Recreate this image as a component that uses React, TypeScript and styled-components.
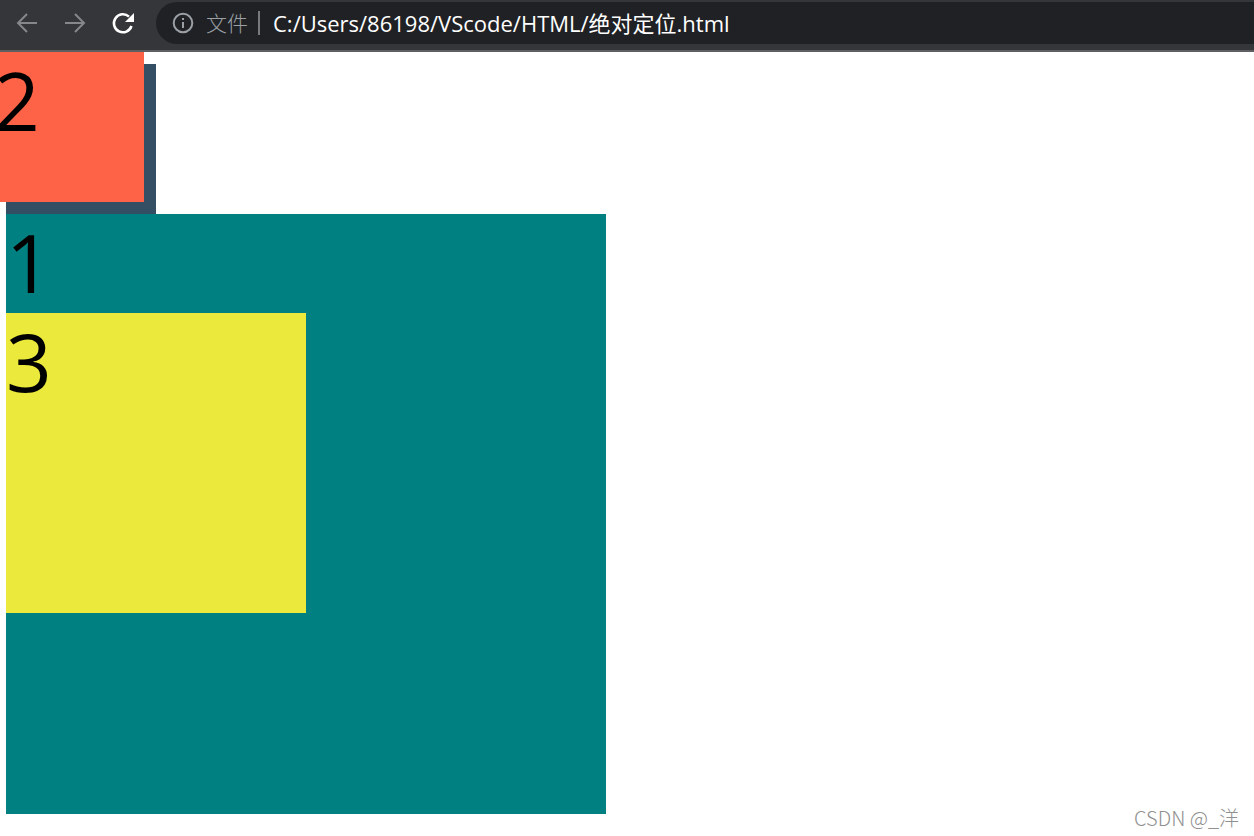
import React from "react";
import styled, { createGlobalStyle } from "styled-components";

const GlobalStyle = createGlobalStyle`
  *, *::before, *::after { box-sizing: border-box; }
  body {
    margin: 0;
    background: #fff;
    font-family: "Open Sans", "Noto Sans", "Noto Sans CJK SC", sans-serif;
  }
`;

const Window = styled.div`
  position: relative;
  display: flex;
  flex-direction: column;
  min-height: 100vh;
  overflow: hidden;
`;

const Toolbar = styled.header`
  display: flex;
  padding: 2px 0 6px 15px;
  background: #35363a;
  border-bottom: 2px solid #5f5f62;
`;

const NavButtons = styled.nav`
  display: flex;
  align-items: center;
  gap: 24px;
  margin-right: 21px;
`;

const IconButton = styled.button<{ $active?: boolean }>`
  display: flex;
  width: 24px;
  height: 24px;
  padding: 0;
  border: 0;
  background: none;
  color: ${(p) => (p.$active ? "#ffffff" : "#86878a")};
`;

const AddressBar = styled.div`
  display: flex;
  flex: 1;
  align-items: center;
  min-width: 0;
  height: 42px;
  padding-left: 15px;
  border-radius: 21px 0 0 21px;
  background: #202124;
`;

const SiteInfo = styled.button`
  display: flex;
  align-items: center;
  gap: 11px;
  height: 24px;
  padding: 0 10px 0 0;
  border: 0;
  border-right: 2px solid #77797c;
  background: none;
  color: #9aa0a6;
  font-family: "Noto Sans CJK SC", sans-serif;
  font-size: 21px;
  font-weight: 300;
  line-height: 22px;
`;

const SiteLabel = styled.span`
  padding-bottom: 2px;
`;

const UrlInput = styled.input`
  flex: 1;
  min-width: 0;
  height: 32px;
  padding: 0 0 2px 13px;
  border: 0;
  outline: 0;
  background: none;
  color: #fff;
  font-family: "Open Sans", "Noto Sans", "Noto Sans CJK SC", sans-serif;
  font-size: 22px;
`;

const Page = styled.main`
  padding: 12px 6px 22px;
  font-size: 80px;
  line-height: 95px;
`;

const Digit = styled.div`
  padding-bottom: 4px;
`;

const Backdrop = styled.section`
  position: relative;
  width: 150px;
  height: 150px;
  background: #344e64;
`;

const ShiftedBox = styled.div`
  position: absolute;
  top: -12px;
  left: -12px;
  width: 150px;
  height: 150px;
  background: tomato;
`;

const OuterBox = styled.section`
  width: 600px;
  height: 600px;
  background: teal;
`;

const InnerBox = styled.div`
  width: 300px;
  height: 300px;
  background: #ebe93b;
`;

const Watermark = styled.footer`
  position: absolute;
  right: 15px;
  bottom: 4px;
  color: #8f8f8f;
  font-family: "Noto Sans CJK SC", sans-serif;
  font-size: 20px;
  font-weight: 300;
  line-height: 28px;
`;

const ArrowIcon = ({ forward = false }: { forward?: boolean }) => (
  <svg width="24" height="24" viewBox="0 0 24 24" fill="none" stroke="currentColor" strokeWidth="2" aria-hidden="true">
    <path d={forward ? "M2 12H21M12 3l9 9-9 9" : "M22 12H3M12 3l-9 9 9 9"} />
  </svg>
);

const ReloadIcon = () => (
  <svg width="24" height="24" viewBox="0 0 24 24" aria-hidden="true">
    <path d="M20.5 15A9 9 0 1 1 18 5.6" fill="none" stroke="currentColor" strokeWidth="2.5" />
    <path d="M23 2v9h-9z" fill="currentColor" />
  </svg>
);

const InfoIcon = () => (
  <svg width="24" height="24" viewBox="0 0 24 24" aria-hidden="true">
    <circle cx="12" cy="12" r="9.3" fill="none" stroke="currentColor" strokeWidth="2" />
    <path d="M11 7h2v2h-2zM11 11h2v6h-2z" fill="currentColor" />
  </svg>
);

export default function App() {
  return (
    <Window>
      <GlobalStyle />
      <Toolbar>
        <NavButtons>
          <IconButton type="button" aria-label="后退"><ArrowIcon /></IconButton>
          <IconButton type="button" aria-label="前进"><ArrowIcon forward /></IconButton>
          <IconButton type="button" aria-label="重新加载" $active><ReloadIcon /></IconButton>
        </NavButtons>
        <AddressBar>
          <SiteInfo type="button"><InfoIcon /><SiteLabel>文件</SiteLabel></SiteInfo>
          <UrlInput
            type="text"
            aria-label="地址"
            spellCheck={false}
            defaultValue="C:/Users/86198/VScode/HTML/绝对定位.html"
          />
        </AddressBar>
      </Toolbar>
      <Page>
        <Backdrop>
          <ShiftedBox><Digit>2</Digit></ShiftedBox>
        </Backdrop>
        <OuterBox>
          <Digit>1</Digit>
          <InnerBox><Digit>3</Digit></InnerBox>
        </OuterBox>
      </Page>
      <Watermark>CSDN @_洋</Watermark>
    </Window>
  );
}
